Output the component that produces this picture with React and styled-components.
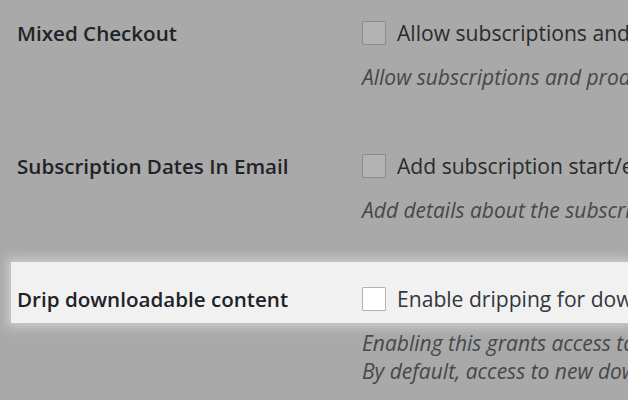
import React from "react";
import styled, { createGlobalStyle } from "styled-components";

const Global = createGlobalStyle`
  html, body { margin: 0; padding: 0; }
  body {
    background: #a9a9a9;
    font-family: "Open Sans", "Noto Sans", sans-serif;
    overflow: hidden;
  }
`;

const Page = styled.div`
  width: 628px;
  height: 400px;
  overflow: hidden;
  background: #a9a9a9;
`;

const List = styled.div`
  display: flex;
  flex-direction: column;
  margin-top: -4px;
`;

const Setting = styled.div`
  display: flex;
  flex-direction: column;
  height: 133px;
`;

const FieldLine = styled.div`
  display: grid;
  grid-template-columns: 345px 1fr;
  align-items: center;
  height: 61px;
  box-sizing: border-box;
  padding: 23px 0 14px 17px;
  white-space: nowrap;
  background: ${(p) => (p.$highlight ? "#f1f1f1" : "transparent")};
  margin-left: ${(p) => (p.$highlight ? "11px" : "0")};
  padding-left: ${(p) => (p.$highlight ? "6px" : "17px")};
  box-shadow: ${(p) =>
    p.$highlight ? "0 0 10px 4px rgba(235,235,235,0.55)" : "none"};
  position: relative;
`;

const Label = styled.div`
  font-size: 20.6px;
  font-weight: 600;
  color: ${(p) => (p.$highlight ? "#1d2327" : "#1f2326")};
  line-height: 28px;
`;

const Control = styled.label`
  display: flex;
  align-items: center;
  gap: 11px;
  font-size: 21.1px;
  line-height: 28px;
  color: ${(p) => (p.$highlight ? "#32373c" : "#2a2b2c")};
`;

const Box = styled.span`
  flex: none;
  width: 24px;
  height: 24px;
  box-sizing: border-box;
  border: 1.5px solid ${(p) => (p.$highlight ? "#b3b3b3" : "#8b8b8b")};
  background: ${(p) => (p.$highlight ? "#ffffff" : "#b3b3b3")};
  border-radius: 1px;
`;

const Description = styled.p`
  margin: 6px 0 0 362px;
  font-size: 21px;
  font-style: italic;
  line-height: 28px;
  color: #464849;
  white-space: nowrap;
`;

const settings = [
  {
    label: "Mixed Checkout",
    control: "Allow subscriptions and products to be purchased simultaneously.",
    desc: ["Allow subscriptions and products to be purchased in a single transaction."],
  },
  {
    label: "Subscription Dates In Email",
    control: "Add subscription start/end dates to emails",
    desc: ["Add details about the subscription dates to order emails."],
  },
  {
    label: "Drip downloadable content",
    control: "Enable dripping for downloadable content on subscription products.",
    desc: [
      "Enabling this grants access to new downloadable files added to a product only after the next renewal is processed.",
      "By default, access to new downloadable files added to a product is granted immediately to any customer that has an active subscription with that product.",
    ],
    highlight: true,
  },
];

export default function App() {
  return (
    <Page>
      <Global />
      <List>
        {settings.map((s) => (
          <Setting key={s.label}>
            <FieldLine $highlight={s.highlight}>
              <Label $highlight={s.highlight}>{s.label}</Label>
              <Control $highlight={s.highlight}>
                <Box $highlight={s.highlight} />
                {s.control}
              </Control>
            </FieldLine>
            <Description>
              {s.desc.map((d, i) => (
                <React.Fragment key={i}>
                  {i > 0 && <br />}
                  {d}
                </React.Fragment>
              ))}
            </Description>
          </Setting>
        ))}
      </List>
    </Page>
  );
}
